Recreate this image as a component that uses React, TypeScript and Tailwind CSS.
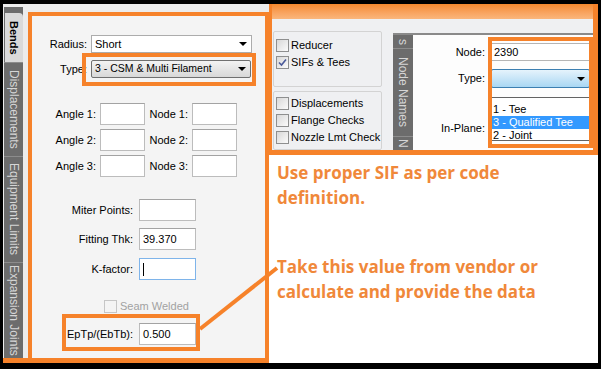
import React from "react";

const orange = "border-[#f6822a]";

function Arrow() {
  return <span className="w-0 h-0 border-l-[4px] border-r-[4px] border-t-[4px] border-l-transparent border-r-transparent border-t-black" />;
}

function Field({ value = "", w, focused = false }: { value?: string; w: string; focused?: boolean }) {
  return (
    <div
      className={`${w} h-[22px] bg-white border flex items-center px-[3px] ${
        focused ? "border-[#7eb4ea]" : "border-[#bcbcbc] border-t-[#a3a3a3]"
      }`}
    >
      {value}
      {focused && <span className="w-px h-[13px] bg-black" />}
    </div>
  );
}

function Check({ checked = false, disabled = false }: { checked?: boolean; disabled?: boolean }) {
  return (
    <span
      className={`w-[13px] h-[13px] shrink-0 border flex items-center justify-center ${
        disabled ? "border-[#c6c6c6] bg-[#f4f4f4]" : "border-[#8e8f8f] bg-linear-to-br from-[#d8d8d8] to-[#fbfbfb]"
      }`}
    >
      {checked && (
        <svg width="9" height="9" viewBox="0 0 9 9">
          <path d="M1 4.5 L3.5 7 L8 1.5" fill="none" stroke="#4a5a9a" strokeWidth="1.6" />
        </svg>
      )}
    </span>
  );
}

function VTab({ h, children }: { h: string; children: React.ReactNode }) {
  return (
    <div className={`${h} border-t border-[#8c8c8c] flex items-center justify-center`}>
      <span className="[writing-mode:vertical-rl] text-[12px] text-[#d6d6d6]">{children}</span>
    </div>
  );
}

function CheckRow({ label, checked = false }: { label: string; checked?: boolean }) {
  return (
    <div className="h-[17px] flex items-center gap-[2px] pl-[2px]">
      <Check checked={checked} />
      <span>{label}</span>
    </div>
  );
}

export default function App() {
  return (
    <div className="relative w-[601px] h-[369px] bg-black overflow-hidden flex pt-[4px] pl-[3px] pr-[3px] pb-[6px] font-['Liberation_Sans',Arial,sans-serif] text-[11px] text-black">
      {/* Bends panel */}
      <div className="w-[266px] flex flex-col bg-[#ececec]">
        <div className="flex-1 flex min-h-0">
          <div className="ml-[1px] mt-[3px] w-[19px] bg-[#6c6c6c] flex flex-col">
            <div className="h-[6px]" />
            <div className="h-[49px] ml-[1px] bg-[#dadada] rounded-tr-[4px] flex items-center justify-center">
              <span className="[writing-mode:vertical-rl] font-bold text-[11px]">Bends</span>
            </div>
            <VTab h="h-[94px]">Displacements</VTab>
            <VTab h="h-[106px]">Equipment Limits</VTab>
            <VTab h="h-[95px]">Expansion Joints</VTab>
          </div>
          <div className="w-[5px]" />
          <div className={`flex-1 mt-[8px] border-t-4 border-l-4 border-r-4 ${orange} bg-[#f4f4f4] flex flex-col pt-[19px]`}>
            <div className="flex items-center h-[18px]">
              <span className="w-[55px] text-right">Radius:</span>
              <div className="ml-[4px] w-[161px] h-[18px] bg-white border border-[#acacac] flex items-center justify-between pl-[3px] pr-[4px]">
                Short
                <Arrow />
              </div>
            </div>
            <div className="flex items-center h-[18px] mt-[7px]">
              <span className="w-[55px] text-right">Type:</span>
              <div className="relative ml-[4px]">
                <div className="w-[160px] h-[18px] rounded-[2px] border border-[#707070] bg-linear-to-b from-[#f3f3f3] to-[#d8d8d8] flex items-center justify-between pl-[3px] pr-[4px] text-[10.5px]">
                  3 - CSM &amp; Multi Filament
                  <Arrow />
                </div>
                <div className={`absolute -left-[9px] -top-[7px] -right-[5px] -bottom-[8px] border-4 ${orange}`} />
              </div>
            </div>

            <div className="flex flex-col gap-[4px] mt-[25px]">
              {[1, 2, 3].map((n) => (
                <div key={n} className="flex items-center">
                  <span className="w-[64px] text-right">Angle {n}:</span>
                  <div className="ml-[4px]">
                    <Field w="w-[45px]" />
                  </div>
                  <span className="w-[43px] text-right">Node {n}:</span>
                  <div className="ml-[4px]">
                    <Field w="w-[45px]" />
                  </div>
                </div>
              ))}
            </div>

            <div className="flex items-center mt-[22px]">
              <span className="w-[101px] text-right">Miter Points:</span>
              <div className="ml-[6px]">
                <Field w="w-[57px]" />
              </div>
            </div>
            <div className="flex items-center mt-[7px]">
              <span className="w-[101px] text-right">Fitting Thk:</span>
              <div className="ml-[6px]">
                <Field w="w-[57px]" value="39.370" />
              </div>
            </div>
            <div className="flex items-center mt-[8px]">
              <span className="w-[101px] text-right">K-factor:</span>
              <div className="ml-[6px]">
                <Field w="w-[57px]" focused />
              </div>
            </div>
            <div className="flex items-center gap-[3px] mt-[20px] ml-[72px] h-[13px]">
              <Check disabled />
              <span className="text-[#a2a2a2]">Seam Welded</span>
            </div>
            <div className="relative w-fit flex items-center mt-[10px]">
              <span className="w-[101px] text-right">EpTp/(EbTb):</span>
              <div className="ml-[6px]">
                <Field w="w-[57px]" value="0.500" />
              </div>
              <div className={`absolute left-[30px] -right-[4px] -top-[9px] -bottom-[6px] border-4 ${orange}`} />
            </div>
          </div>
        </div>
        <div className="h-[5px] bg-[#f6822a]" />
      </div>

      {/* SIF / Tees area */}
      <div className="flex-1 flex flex-col">
        <div className={`h-[151px] border-l-[3px] border-r-[5px] border-b-[5px] ${orange} flex flex-col`}>
          <div className="h-[15px] bg-linear-to-b from-[#f5892c] to-[#fab67c]" />
          <div className="flex-1 min-h-0 flex bg-[#eff0f2] overflow-hidden">
            <div className="w-[121px] pt-[12px] flex flex-col gap-[4px]">
              <div className="ml-[1px] w-[109px] h-[59px] border border-[#d3d3d3] rounded-[2px] pt-[5px]">
                <CheckRow label="Reducer" />
                <CheckRow label="SIFs & Tees" checked />
              </div>
              <div className="ml-[1px] w-[109px] h-[62px] border border-[#d3d3d3] rounded-[2px] pt-[3px]">
                <CheckRow label="Displacements" />
                <CheckRow label="Flange Checks" />
                <CheckRow label="Nozzle Lmt Check" />
              </div>
            </div>
            <div className="flex-1 mt-[14px] border-t-2 border-[#8a8a8a] flex">
              <div className="w-[20px] bg-[#6c6c6c] flex flex-col">
                <div className="h-[13px] flex items-center justify-center">
                  <span className="[writing-mode:vertical-rl] text-[12px] leading-[12px] text-[#d6d6d6]">s</span>
                </div>
                <VTab h="h-[88px]">Node Names</VTab>
                <div className="flex-1 border-t border-[#8c8c8c] flex flex-col items-center pt-[2px]">
                  <span className="[writing-mode:vertical-rl] text-[12px] leading-[12px] text-[#d6d6d6]">N</span>
                </div>
              </div>
              <div className="relative flex-1 bg-[#fdfdfd] overflow-hidden pt-[8px]">
                <div className="flex items-center h-[18px]">
                  <span className="w-[72px] text-right">Node:</span>
                  <div className="ml-[6px] flex-1 h-[18px] bg-white border border-[#b5b5b5] flex items-center px-[2px]">2390</div>
                </div>
                <div className="flex items-center h-[19px] mt-[8px]">
                  <span className="w-[72px] text-right">Type:</span>
                  <div className="ml-[6px] w-[99px] h-[19px] rounded-[2px] border border-[#3c7fb1] bg-linear-to-b from-[#e5f3fc] to-[#a9d7f3] flex items-center justify-end pr-[4px]">
                    <Arrow />
                  </div>
                </div>
                <div className="flex items-center h-[18px] mt-[31px]">
                  <span className="w-[72px] text-right">In-Plane:</span>
                </div>
                <div className="flex items-center h-[18px] mt-[8px]">
                  <span className="w-[72px] text-right">Out-Plane:</span>
                </div>
                <div className="absolute left-[78px] top-[62px] w-[100px] h-[44px] bg-white border border-[#646464] pt-[5px] leading-[13px]">
                  <div className="h-[13px] px-[1px]">1 - Tee</div>
                  <div className="h-[13px] px-[1px] bg-[#3399ff] text-white">3 - Qualified Tee</div>
                  <div className="h-[13px] px-[1px]">2 - Joint</div>
                </div>
                <div className={`absolute left-[75px] top-[2px] right-0 bottom-[2px] border-4 ${orange}`} />
              </div>
            </div>
          </div>
        </div>
        <div className="flex-1 bg-white pl-[8px] pt-[5px] font-['Open_Sans',sans-serif] font-bold text-[17px] leading-[25px] text-[#f0883a]">
          <p>
            Use proper SIF as per code
            <br />
            definition.
          </p>
          <p className="mt-[44px]">
            Take this value from vendor or
            <br />
            calculate and provide the data
          </p>
        </div>
      </div>

      <svg className="absolute inset-0 pointer-events-none" width="601" height="369">
        <line x1="200" y1="329" x2="277" y2="268" stroke="#f6822a" strokeWidth="4" />
      </svg>
    </div>
  );
}
